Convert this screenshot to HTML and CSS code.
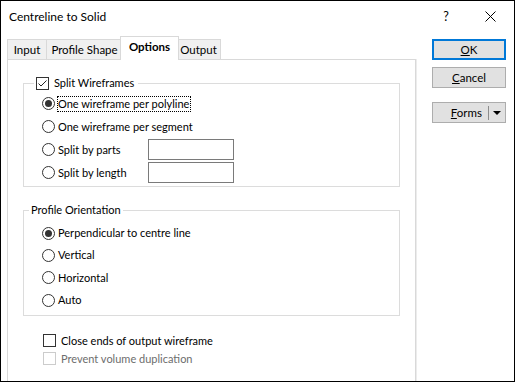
FILE: index.html
```html
<!DOCTYPE html>
<html lang="en">
<head>
    <meta charset="UTF-8">
    <title>Centreline to Solid</title>
    <link rel="stylesheet" href="styles.css">
</head>
<body>
<div class="window">
    <div class="titlebar">
        <span class="title">Centreline to Solid</span>
        <span class="ctrl help">?</span>
        <span class="ctrl close">
            <svg width="11" height="11" viewBox="0 0 11 11"><path d="M0.5 0.5 L10.5 10.5 M10.5 0.5 L0.5 10.5" stroke="#000" stroke-width="1" fill="none"/></svg>
        </span>
    </div>
    <div class="content">
        <div class="tabs">
            <div class="tab-strip">
                <div class="tab t-input">Input</div>
                <div class="tab t-profile">Profile Shape</div>
                <div class="tab t-options active">Options</div>
                <div class="tab t-output">Output</div>
            </div>
            <div class="panel">
                <fieldset class="group split">
                    <legend><span class="check"><svg width="11" height="11" viewBox="0 0 11 11"><path d="M1.5 5.5 L4 8 L9.5 2.5" stroke="#222" stroke-width="1" fill="none"/></svg></span>Split Wireframes</legend>
                    <div class="row"><span class="opt"><span class="radio on"></span><span class="label focus">One wireframe per polyline</span></span></div>
                    <div class="row"><span class="opt"><span class="radio"></span><span class="label">One wireframe per segment</span></span></div>
                    <div class="row"><span class="opt fixed"><span class="radio"></span><span class="label">Split by parts</span></span><span class="textbox"></span></div>
                    <div class="row"><span class="opt fixed"><span class="radio"></span><span class="label">Split by length</span></span><span class="textbox"></span></div>
                </fieldset>
                <fieldset class="group orient">
                    <legend>Profile Orientation</legend>
                    <div class="row"><span class="opt"><span class="radio on"></span><span class="label">Perpendicular to centre line</span></span></div>
                    <div class="row"><span class="opt"><span class="radio"></span><span class="label">Vertical</span></span></div>
                    <div class="row"><span class="opt"><span class="radio"></span><span class="label">Horizontal</span></span></div>
                    <div class="row"><span class="opt"><span class="radio"></span><span class="label">Auto</span></span></div>
                </fieldset>
                <div class="checks">
                    <div class="crow"><span class="check"></span>Close ends of output wireframe</div>
                    <div class="crow disabled"><span class="check"></span>Prevent volume duplication</div>
                </div>
            </div>
        </div>
        <div class="buttons">
            <div class="btn default"><u>O</u>K</div>
            <div class="btn"><u>C</u>ancel</div>
            <div class="btn forms"><span><u>F</u>orms</span><span class="sep"></span><span class="arrow"></span></div>
        </div>
    </div>
</div>
</body>
</html>
```

FILE: styles.css
```css
body {
    margin: 0;
    font-family: Lato, "Noto Sans", sans-serif;
    font-size: 11px;
    color: #000;
}

.window {
    width: 515px;
    height: 382px;
    box-sizing: border-box;
    border: 1px solid #000;
    background: #fff;
    overflow: hidden;
}

.titlebar {
    display: flex;
    align-items: center;
    height: 31px;
}

.title {
    padding-left: 8px;
    flex-grow: 1;
    font-size: 12px;
}

.ctrl {
    width: 46px;
    height: 31px;
    display: flex;
    align-items: center;
    justify-content: center;
}

.help {
    font-size: 12.5px;
    padding-left: 4px;
    box-sizing: border-box;
}

.close {
    width: 47px;
}

.content {
    display: flex;
    padding-left: 6px;
    margin-top: 4px;
}

.tabs {
    width: 409px;
}

.tab-strip {
    display: flex;
    align-items: flex-start;
    height: 23px;
}

.tab {
    box-sizing: border-box;
    height: 20px;
    margin-top: 3px;
    margin-left: -1px;
    border: 1px solid #d9d9d9;
    border-bottom: none;
    background: #f0f0f0;
    display: flex;
    align-items: center;
    justify-content: center;
    line-height: 16px;
    font-size: 11.5px;
}

.t-input { width: 40px; margin-left: 0; }
.t-profile { width: 77px; }
.t-output { width: 45px; }

.tab.active {
    position: relative;
    z-index: 1;
    width: 59px;
    height: 24px;
    margin: 0 -2px 0 -3px;
    background: #fff;
    font-weight: bold;
    padding-bottom: 3px;
}

.panel {
    box-sizing: border-box;
    height: 340px;
    border: 1px solid #d9d9d9;
    border-bottom: none;
    box-shadow: 1px 0 0 #ececec;
    padding: 15px 15px 0 15px;
}

.group {
    margin: 0;
    padding: 0;
    border: 1px solid #dcdcdc;
    min-width: 0;
}

.group legend {
    display: flex;
    align-items: center;
    height: 16px;
    line-height: 16px;
    padding: 0 2px;
}

.split legend {
    margin-left: 10px;
    padding-right: 4px;
}

.split {
    padding-top: 1px;
    padding-bottom: 2px;
}

.orient {
    margin-top: 15px;
    padding-top: 4px;
    padding-bottom: 4px;
}

.orient legend {
    margin-left: 5px;
}

.row {
    display: flex;
    align-items: center;
    height: 23px;
    padding-left: 18px;
}

.orient .row {
    height: 22px;
}

.orient .row:nth-of-type(3) {
    height: 23px;
}

.opt {
    display: flex;
    align-items: center;
}

.opt.fixed {
    width: 106px;
}

.radio {
    box-sizing: border-box;
    width: 13px;
    height: 13px;
    border: 1px solid #333;
    border-radius: 50%;
    display: flex;
    align-items: center;
    justify-content: center;
    flex-shrink: 0;
}

.radio.on::after {
    content: "";
    width: 7px;
    height: 7px;
    border-radius: 50%;
    background: #333;
}

.label {
    margin-left: 3px;
    line-height: 14px;
}

.label.focus {
    margin-left: 2px;
    padding-right: 1px;
    border: 1px dotted #000;
}

.textbox {
    box-sizing: border-box;
    width: 86px;
    height: 21px;
    border: 1px solid #7a7a7a;
}

.check {
    box-sizing: border-box;
    width: 13px;
    height: 13px;
    border: 1px solid #333;
    margin-right: 5px;
    display: flex;
    align-items: center;
    justify-content: center;
    flex-shrink: 0;
}

.checks {
    margin-top: 15px;
    padding-left: 20px;
}

.crow {
    display: flex;
    align-items: center;
    height: 18px;
}

.crow.disabled {
    color: #6d6d6d;
}

.crow.disabled .check {
    border-color: #cccccc;
}

.buttons {
    margin-left: 16px;
    margin-top: 3px;
    width: 74px;
}

.btn {
    box-sizing: border-box;
    height: 21px;
    border: 1px solid #adadad;
    background: #e1e1e1;
    display: flex;
    align-items: center;
    justify-content: center;
    margin-bottom: 7px;
    font-size: 11.5px;
}

.btn.default {
    border: 2px solid #0078d7;
}

.btn.forms {
    margin-top: 14px;
    justify-content: flex-end;
}

.sep {
    width: 1px;
    height: 14px;
    background: #8c8c8c;
    margin-left: 6px;
}

.arrow {
    width: 16px;
    display: flex;
    justify-content: center;
}

.arrow::after {
    content: "";
    border-left: 4px solid transparent;
    border-right: 4px solid transparent;
    border-top: 4px solid #000;
}
```
